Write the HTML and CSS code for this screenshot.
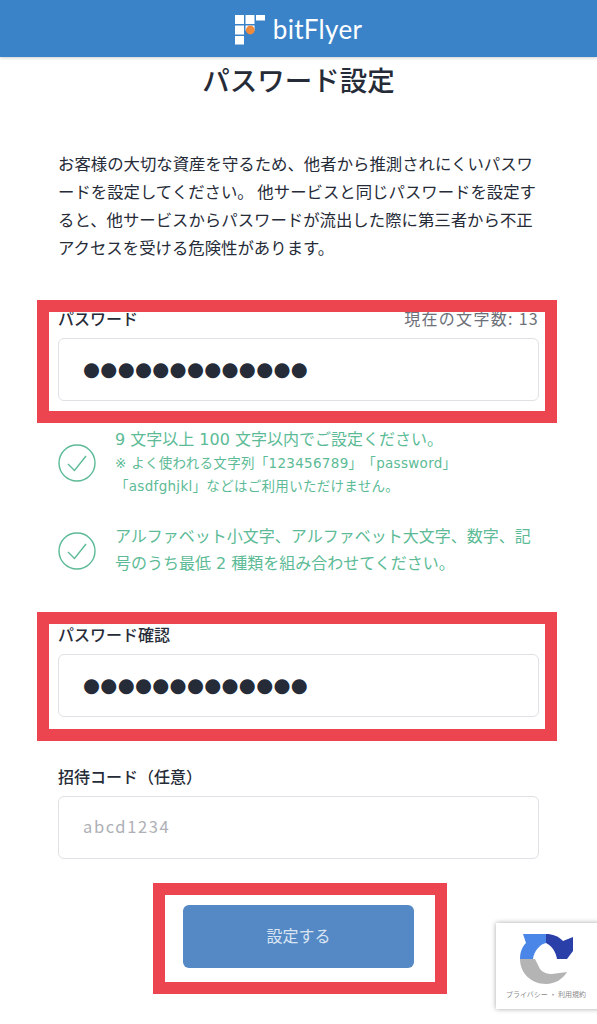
FILE: index.html
```html
<!DOCTYPE html>
<html lang="ja">
<head>
<meta charset="utf-8">
<title>パスワード設定</title>
<link rel="stylesheet" href="styles.css">
</head>
<body>
<div class="page">
  <header class="topbar">
    <svg class="logo-mark" viewBox="0 0 32 32" width="32" height="32" aria-hidden="true">
      <rect x="0" y="0" width="9" height="9" fill="#fff"/>
      <rect x="10.5" y="0" width="9" height="9" fill="#fff"/>
      <rect x="21" y="0" width="9" height="5.5" fill="#fff"/>
      <rect x="0" y="10.5" width="9" height="9" fill="#fff"/>
      <rect x="10.5" y="10.5" width="9" height="5" fill="#fff"/>
      <circle cx="15.3" cy="15" r="4.4" fill="#ee8a3c"/>
      <rect x="0" y="21" width="9" height="8.5" fill="#fff"/>
    </svg>
    <span class="logo-text">bitFlyer</span>
  </header>

  <main class="content">
    <h1 class="title">パスワード設定</h1>
    <p class="lead">お客様の大切な資産を守るため、他者から推測されにくいパスワードを設定してください。 他サービスと同じパスワードを設定すると、他サービスからパスワードが流出した際に第三者から不正アクセスを受ける危険性があります。</p>

    <div class="field first-field">
      <div class="label-row">
        <span class="label">パスワード</span>
        <span class="count">現在の文字数: 13</span>
      </div>
      <div class="input masked">●●●●●●●●●●●●●</div>
    </div>

    <ul class="rules">
      <li class="rule rule-one">
        <svg class="check" viewBox="0 0 38 38" width="38" height="38" aria-hidden="true"><circle cx="19" cy="19" r="18" fill="none" stroke="#5cbb96" stroke-width="1.4"/><path d="M10 20l6.5 6.5L28 12" fill="none" stroke="#5cbb96" stroke-width="1.4"/></svg>
        <div class="rule-body">
          <p class="rule-main">9 文字以上 100 文字以内でご設定ください。</p>
          <p class="rule-note">※ よく使われる文字列「123456789」「password」<br>「asdfghjkl」などはご利用いただけません。</p>
        </div>
      </li>
      <li class="rule rule-two">
        <svg class="check" viewBox="0 0 38 38" width="38" height="38" aria-hidden="true"><circle cx="19" cy="19" r="18" fill="none" stroke="#5cbb96" stroke-width="1.4"/><path d="M10 20l6.5 6.5L28 12" fill="none" stroke="#5cbb96" stroke-width="1.4"/></svg>
        <div class="rule-body">
          <p class="rule-main">アルファベット小文字、アルファベット大文字、数字、記号のうち最低 2 種類を組み合わせてください。</p>
        </div>
      </li>
    </ul>

    <div class="field second-field">
      <div class="label-row"><span class="label">パスワード確認</span></div>
      <div class="input masked">●●●●●●●●●●●●●</div>
    </div>

    <div class="field third-field">
      <div class="label-row"><span class="label">招待コード（任意）</span></div>
      <div class="input placeholder">abcd1234</div>
    </div>

    <div class="actions"><button class="submit" type="button">設定する</button></div>
  </main>

  <div class="mark mark-a"></div>
  <div class="mark mark-b"></div>
  <div class="mark mark-c"></div>

  <aside class="recaptcha">
    <svg class="recaptcha-icon" viewBox="0 0 54 54" width="54" height="54" aria-hidden="true">
      <path fill="#b4b4b4" d="M1 27H16L21 37C24 41 29 42 33 42L48 40C44 47 36 52 27 52C12 52 1 41 1 27Z"/>
      <path fill="#4a86e8" d="M1 27C1 20 3 15 7 11L4 2H27V11C21 12 15 19 14 27Z"/>
      <path fill="#2a3fa8" d="M27 2C34 2 39 4 44 9L54 5V19L48 27H38C37 20 33 14 27 11Z"/>
    </svg>
    <span class="recaptcha-text">プライバシー ・ 利用規約</span>
  </aside>
</div>
</body>
</html>
```

FILE: styles.css
```css
* { box-sizing: border-box; }
html, body { margin: 0; padding: 0; background: #fff; }
body { font-family: "Noto Sans CJK JP", "Noto Sans", sans-serif; color: #262b38; text-spacing-trim: space-all; }
.page { position: relative; width: 597px; height: 1024px; overflow: hidden; background: #fff; }

.topbar { height: 57px; background: #3b83c9; display: flex; align-items: center; justify-content: center; gap: 6px; box-shadow: 0 1px 3px rgba(0,0,0,.2); }
.logo-mark { margin-top: 4px; }
.logo-text { font-family: Lato, sans-serif; font-size: 26px; color: #fff; letter-spacing: .3px; margin-top: 1px; }

.content { padding: 0 58px; }
.title { margin: 3px 0 0; height: 38px; line-height: 38px; font-size: 27.5px; font-weight: 500; text-align: center; }
.lead { margin: 51px 0 0; font-size: 16.4px; line-height: 28px; }

.field { display: block; }
.first-field { margin-top: 47px; }
.second-field { margin-top: 47px; }
.third-field { margin-top: 49px; }
.label-row { display: flex; justify-content: space-between; align-items: center; height: 22px; }
.label { font-size: 16px; font-weight: 500; position: relative; top: -1px; }
.count { font-size: 16px; color: #6d7078; letter-spacing: 1.3px; position: relative; top: -1px; }
.input { height: 63px; margin-top: 8px; width: 481px; border: 1.5px solid #dfe1e4; border-radius: 6px; padding: 0 24px; display: flex; align-items: center; }
.masked { font-family: "DejaVu Sans", sans-serif; font-size: 19.5px; letter-spacing: .3px; color: #262b38; }
.placeholder { font-size: 16.5px; letter-spacing: 1.6px; color: #aeb0b6; padding-bottom: 4px; }

.rules { list-style: none; margin: 25px 0 0; padding: 0; }
.rule { display: flex; align-items: center; gap: 19px; color: #5cbb96; }
.rule-two { margin-top: 25px; }
.check { margin-top: 2px; }
.rule p { margin: 0; font-family: "DejaVu Sans", "Noto Sans CJK JP", sans-serif; }
.rule-main { font-size: 16px; line-height: 27px; }
.rule-note { font-size: 13.5px; letter-spacing: .3px; line-height: 23px; margin-top: -1px !important; }
.rule-body { flex: 1; }

.actions { display: flex; justify-content: center; margin-top: 46px; }
.submit { width: 231px; height: 63px; background: #5589c5; border: 0; border-radius: 6px; color: #d9e5f2; font: 400 16px "Noto Sans CJK JP", sans-serif; padding: 0 0 4px; }

.mark { position: absolute; border: 12px solid #ec4550; }
.mark-a { left: 37px; top: 300px; width: 520px; height: 123px; }
.mark-b { left: 37px; top: 612px; width: 520px; height: 129px; }
.mark-c { left: 153px; top: 883px; width: 294px; height: 111px; }

.recaptcha { position: absolute; left: 496px; top: 923px; width: 110px; height: 86px; background: #fff; box-shadow: 0 0 5px rgba(0,0,0,.35); padding: 9px 0 0 23px; }
.recaptcha-icon { display: block; }
.recaptcha-text { position: absolute; left: 10px; top: 66px; font-size: 7px; line-height: 10px; color: #8a8a8a; white-space: nowrap; }
```
